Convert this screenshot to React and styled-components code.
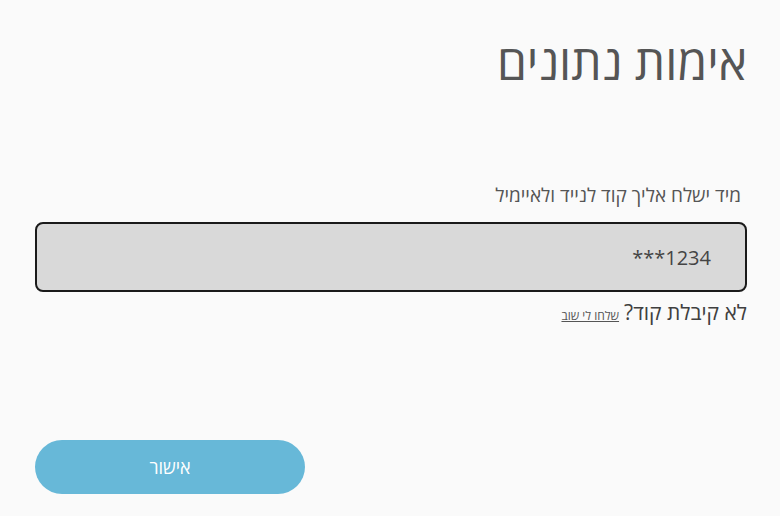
import React from "react";
import styled, { createGlobalStyle } from "styled-components";

const Global = createGlobalStyle`
  html, body { margin: 0; padding: 0; background: #fafafa; }
  body { font-family: "Open Sans", "Noto Sans", sans-serif; }
`;

const Page = styled.div`
  direction: rtl;
  width: 780px;
  height: 516px;
  box-sizing: border-box;
  padding: 28px 33px 0 35px;
  display: flex;
  flex-direction: column;
  color: #4a4a4a;
`;

const Title = styled.h1`
  margin: 0;
  font-size: 48px;
  font-weight: 400;
  line-height: 68px;
  color: #555;
`;

const Subtitle = styled.p`
  margin: 87px 6px 0 0;
  font-size: 19px;
  line-height: 24px;
  color: #555;
`;

const Field = styled.div`
  margin-top: 15px;
  height: 70px;
  box-sizing: border-box;
  border: 2px solid #1a1a1a;
  border-radius: 8px;
  background: #d9d9d9;
  display: flex;
  align-items: center;
  padding: 0 34px 0 20px;
  font-size: 20px;
  color: #444;
`;

const Value = styled.span`
  direction: ltr;
`;

const Resend = styled.div`
  margin-top: 6px;
  display: flex;
  align-items: baseline;
  gap: 5px;
  font-size: 21px;
  line-height: 28px;
  color: #3f3f3f;
`;

const Link = styled.a`
  font-size: 12px;
  color: #555;
  text-decoration: underline;
`;

const Spacer = styled.div`
  flex: 1;
`;

const Actions = styled.div`
  display: flex;
  justify-content: flex-end;
  padding-bottom: 22px;
`;

const Button = styled.button`
  width: 270px;
  height: 54px;
  border: none;
  border-radius: 27px;
  background: #67b8d8;
  color: #fff;
  font-family: inherit;
  font-size: 18px;
  cursor: pointer;
`;

export default function App() {
  return (
    <>
      <Global />
      <Page>
        <Title>אימות נתונים</Title>
        <Subtitle>מיד ישלח אליך קוד לנייד ולאיימיל</Subtitle>
        <Field>
          <Value>***1234</Value>
        </Field>
        <Resend>
          <span>לא קיבלת קוד?</span>
          <Link href="#">שלחו לי שוב</Link>
        </Resend>
        <Spacer />
        <Actions>
          <Button>אישור</Button>
        </Actions>
      </Page>
    </>
  );
}
